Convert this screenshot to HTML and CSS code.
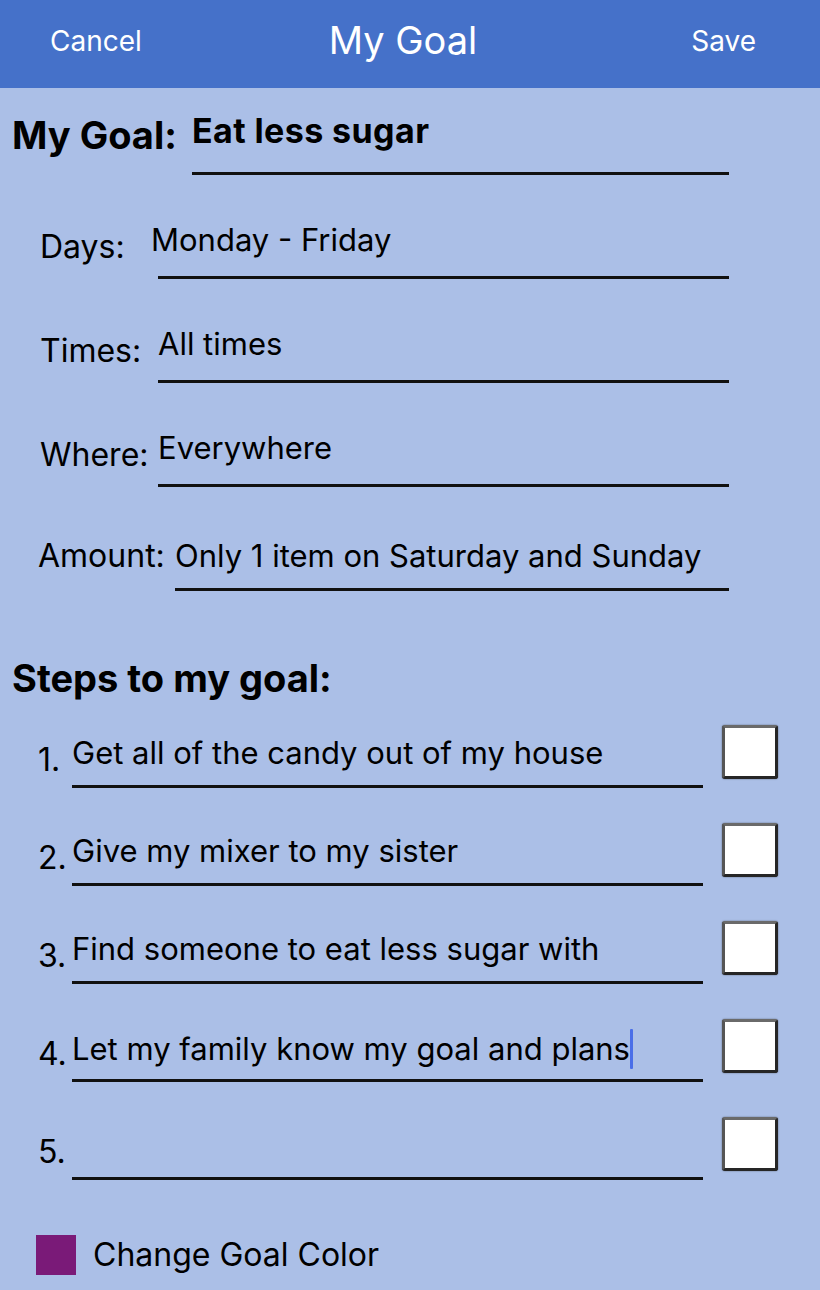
FILE: index.html
```html
<!DOCTYPE html>
<html>
<head>
<meta charset="utf-8">
<link rel="stylesheet" href="styles.css">
</head>
<body>
<header class="navbar">
  <span class="nav-btn">Cancel</span>
  <span class="nav-title">My Goal</span>
  <span class="nav-btn nav-right">Save</span>
</header>
<main class="content">
  <div class="goal-row">
    <div class="goal-label">My Goal:</div>
    <div class="goal-field">Eat less sugar</div>
  </div>
  <div class="field-row">
    <div class="field-label">Days:</div>
    <div class="field-line"><span class="shift">Monday - Friday</span></div>
  </div>
  <div class="field-row">
    <div class="field-label">Times:</div>
    <div class="field-line">All times</div>
  </div>
  <div class="field-row">
    <div class="field-label">Where:</div>
    <div class="field-line">Everywhere</div>
  </div>
  <div class="field-row amount">
    <div class="field-label">Amount:</div>
    <div class="field-line">Only 1 item on Saturday and Sunday</div>
  </div>

  <h2 class="steps-title">Steps to my goal:</h2>

  <div class="steps">
    <div class="step-row">
      <div class="step-num">1.</div>
      <div class="step-line">Get all of the candy out of my house</div>
      <div class="checkbox"></div>
    </div>
    <div class="step-row">
      <div class="step-num">2.</div>
      <div class="step-line">Give my mixer to my sister</div>
      <div class="checkbox"></div>
    </div>
    <div class="step-row">
      <div class="step-num">3.</div>
      <div class="step-line">Find someone to eat less sugar with</div>
      <div class="checkbox"></div>
    </div>
    <div class="step-row">
      <div class="step-num">4.</div>
      <div class="step-line">Let my family know my goal and plans<span class="caret"></span></div>
      <div class="checkbox"></div>
    </div>
    <div class="step-row">
      <div class="step-num">5.</div>
      <div class="step-line"></div>
      <div class="checkbox"></div>
    </div>
  </div>

  <div class="color-row">
    <div class="swatch"></div>
    <span class="color-label">Change Goal Color</span>
  </div>
</main>
</body>
</html>
```

FILE: styles.css
```css
html, body {
  margin: 0;
  padding: 0;
}
body {
  width: 820px;
  height: 1290px;
  background: #abbfe7;
  font-family: Inter, "Noto Sans", sans-serif;
  color: #000;
  overflow: hidden;
}
.navbar {
  height: 88px;
  background: #4571c9;
  display: grid;
  grid-template-columns: 1fr auto 1fr;
  align-items: center;
  padding: 0 64px 0 50px;
  color: #fff;
  box-sizing: border-box;
}
.nav-btn {
  font-size: 28px;
  margin-top: -7px;
}
.nav-right {
  justify-self: end;
}
.nav-title {
  font-size: 38px;
  margin-top: -8px;
}
.content {
  display: flex;
  flex-direction: column;
}
.goal-row {
  display: flex;
  align-items: flex-end;
  height: 87px;
  padding-left: 12px;
}
.goal-label {
  width: 180px;
  font-size: 38px;
  font-weight: 700;
  line-height: 40px;
  padding-bottom: 20px;
  white-space: nowrap;
}
.goal-field {
  width: 537px;
  font-size: 34px;
  font-weight: 700;
  letter-spacing: 0.4px;
  line-height: 36px;
  padding-bottom: 23px;
  border-bottom: 3px solid #111;
}
.field-row {
  display: flex;
  align-items: flex-end;
  height: 104px;
  padding-left: 40px;
  padding-right: 91px;
}
.field-label {
  width: 118px;
  font-size: 32px;
  line-height: 36px;
  padding-bottom: 14px;
}
.field-line {
  flex: 1;
  font-size: 31px;
  line-height: 36px;
  padding-bottom: 18px;
  border-bottom: 3px solid #111;
}
.shift {
  margin-left: -7px;
}
.amount {
  padding-left: 38px;
}
.amount .field-label {
  width: 140px;
  padding-bottom: 17px;
}
.amount .field-line {
  padding-bottom: 14px;
  margin-left: -3px;
}
.steps-title {
  margin: 65px 0 0 12px;
  font-size: 38px;
  font-weight: 700;
  line-height: 44px;
}
.steps {
  display: flex;
  flex-direction: column;
  margin-top: -10px;
}
.step-row {
  display: flex;
  align-items: flex-end;
  height: 98px;
  padding-left: 38px;
}
.step-num {
  width: 34px;
  font-size: 32px;
  line-height: 36px;
  padding-bottom: 10px;
}
.step-line {
  width: 631px;
  height: 36px;
  font-size: 31px;
  line-height: 36px;
  padding-bottom: 14px;
  border-bottom: 3px solid #111;
  white-space: nowrap;
}
.checkbox {
  width: 50px;
  height: 48px;
  margin-left: 19px;
  margin-bottom: 9px;
  background: #fff;
  border: 3px solid #262626;
  border-top-color: #6a6a6a;
  border-left-color: #555;
  border-radius: 3px;
  box-shadow: 0 0 1.5px rgba(0, 0, 0, 0.6);
}
.caret {
  display: inline-block;
  width: 3px;
  height: 40px;
  background: #4a6ee8;
  vertical-align: -9px;
  border-radius: 1px;
}
.color-row {
  display: flex;
  align-items: center;
  gap: 17px;
  padding-left: 36px;
  margin-top: 55px;
}
.swatch {
  width: 40px;
  height: 40px;
  background: #7a1a78;
}
.color-label {
  font-size: 32px;
  line-height: 40px;
}
```
